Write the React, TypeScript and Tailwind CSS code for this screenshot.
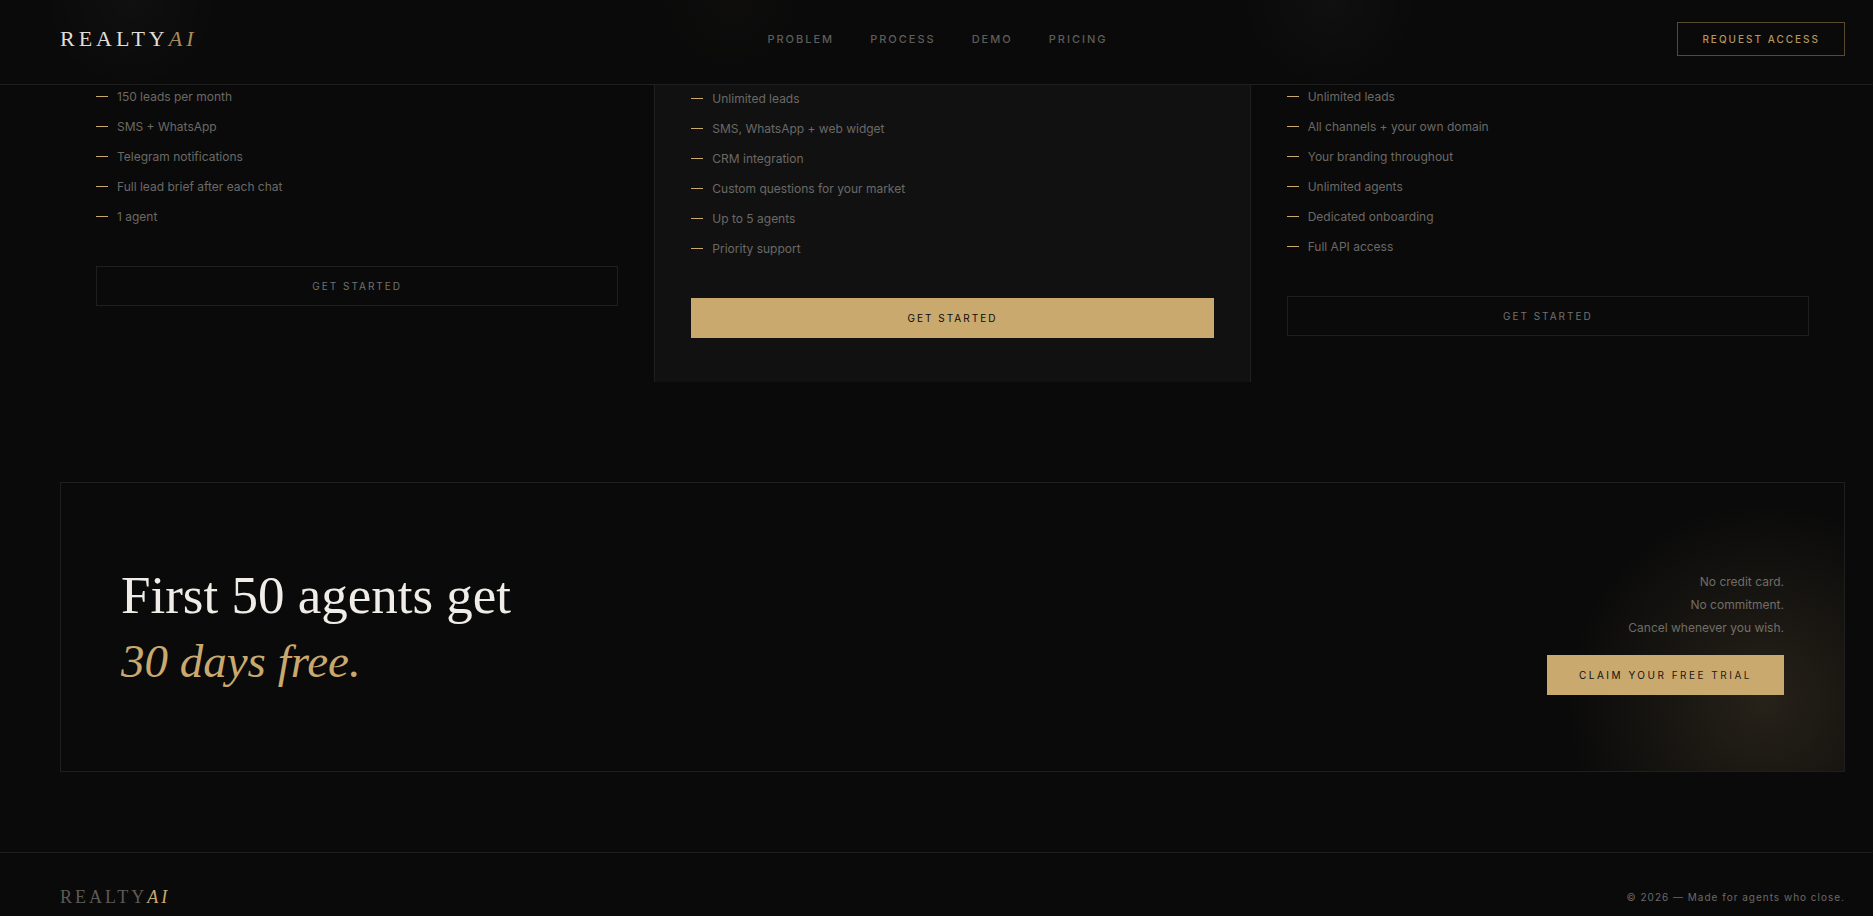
const navLinks = ['Problem', 'Process', 'Demo', 'Pricing']

const plans = [
  {
    name: 'Starter',
    featured: false,
    features: [
      '150 leads per month',
      'SMS + WhatsApp',
      'Telegram notifications',
      'Full lead brief after each chat',
      '1 agent',
    ],
  },
  {
    name: 'Pro',
    featured: true,
    features: [
      'Unlimited leads',
      'SMS, WhatsApp + web widget',
      'CRM integration',
      'Custom questions for your market',
      'Up to 5 agents',
      'Priority support',
    ],
  },
  {
    name: 'Agency',
    featured: false,
    features: [
      'Unlimited leads',
      'All channels + your own domain',
      'Your branding throughout',
      'Unlimited agents',
      'Dedicated onboarding',
      'Full API access',
    ],
  },
]

function Header() {
  return (
    <header className="relative overflow-hidden border-b border-[#1f1f1f] pt-[22px] pb-7 pl-[60px] pr-7">
      <div className="pointer-events-none absolute inset-0 bg-[radial-gradient(circle_at_7%_0,rgba(255,255,255,0.025),transparent_90px),radial-gradient(circle_at_39%_0,rgba(201,169,110,0.02),transparent_80px),radial-gradient(circle_at_71%_0,rgba(255,255,255,0.025),transparent_90px)]" />
      <div className="relative flex items-center justify-between">
        <a href="#top" className="font-['Liberation_Serif',serif] text-[22px] leading-6 tracking-[4px] text-[#e0ded9]">
          REALTY<em className="text-[#a88d5c]">AI</em>
        </a>
        <nav className="flex gap-9">
          {navLinks.map((link) => (
            <a
              key={link}
              href={`#${link.toLowerCase()}`}
              className="text-[11px] leading-4 font-medium uppercase tracking-[2px] text-[#5f5d5a]"
            >
              {link}
            </a>
          ))}
        </nav>
        <button className="h-[34px] border border-[#59492f] px-6 text-[10px] leading-4 font-medium uppercase tracking-[2px] text-[#b5965f]">
          Request Access
        </button>
      </div>
    </header>
  )
}

function Pricing() {
  return (
    <section id="pricing" className="grid grid-cols-3 gap-px pl-[60px] pr-7">
      {plans.map((plan) => (
        <div
          key={plan.name}
          className={
            plan.featured
              ? '-mx-px border-x border-[#1f1f1f] bg-[#111111] px-9 pt-[3px] pb-11'
              : 'px-9 pt-px pb-11'
          }
        >
          <ul className="mb-[30px]">
            {plan.features.map((feature) => (
              <li key={feature} className="flex h-[30px] items-start gap-[9px] text-[12px] leading-[22px] text-[#6b6966]">
                <span className="mt-[10px] h-px w-3 bg-[#c9a96e]" />
                {feature}
              </li>
            ))}
          </ul>
          <button
            className={
              plan.featured
                ? 'h-10 w-full bg-[#c9a96e] text-[10px] uppercase tracking-[2px] text-[#0a0a0a]'
                : 'h-10 w-full border border-[#1f1f1f] text-[10px] uppercase tracking-[2px] text-[#73716e]'
            }
          >
            Get Started
          </button>
        </div>
      ))}
    </section>
  )
}

function Offer() {
  return (
    <section className="pt-[100px] pb-20 pl-[60px] pr-7">
      <div className="relative flex items-end justify-between overflow-hidden border border-[#1f1f1f] px-[60px] py-20">
        <h2 className="font-['Liberation_Serif',serif] text-[53px] leading-[64px] text-[#f0ede8]">
          First 50 agents get
          <br />
          <em className="text-[47px] leading-none text-[#c9a96e]">30 days free.</em>
        </h2>
        <div className="-mb-1 flex flex-col items-end">
          <p className="mb-4 text-right text-[12px] leading-[23px] text-[#6b6966]">
            No credit card.
            <br />
            No commitment.
            <br />
            Cancel whenever you wish.
          </p>
          <button className="h-10 bg-[#c9a96e] px-8 text-[10px] uppercase tracking-[0.25em] text-[#0a0a0a]">
            Claim your free trial
          </button>
        </div>
        <div className="pointer-events-none absolute -right-[120px] -bottom-[130px] size-[400px] bg-[radial-gradient(circle,rgba(201,169,110,0.15),transparent_70%)]" />
      </div>
    </section>
  )
}

function Footer() {
  return (
    <footer className="flex items-center justify-between border-t border-[#1f1f1f] pt-[33px] pb-2 pl-[60px] pr-7">
      <div className="font-['Liberation_Serif',serif] text-[18px] leading-[22px] tracking-[3px] text-[#5c5a57]">
        REALTY<em className="text-[#c9a96e]">AI</em>
      </div>
      <p className="text-[10px] leading-4 tracking-[1px] text-[#6b6966]">© 2026 — Made for agents who close.</p>
    </footer>
  )
}

export default function App() {
  return (
    <div id="top" className="min-h-screen bg-[#0a0a0a] font-['Inter',sans-serif]">
      <Header />
      <Pricing />
      <Offer />
      <Footer />
    </div>
  )
}
